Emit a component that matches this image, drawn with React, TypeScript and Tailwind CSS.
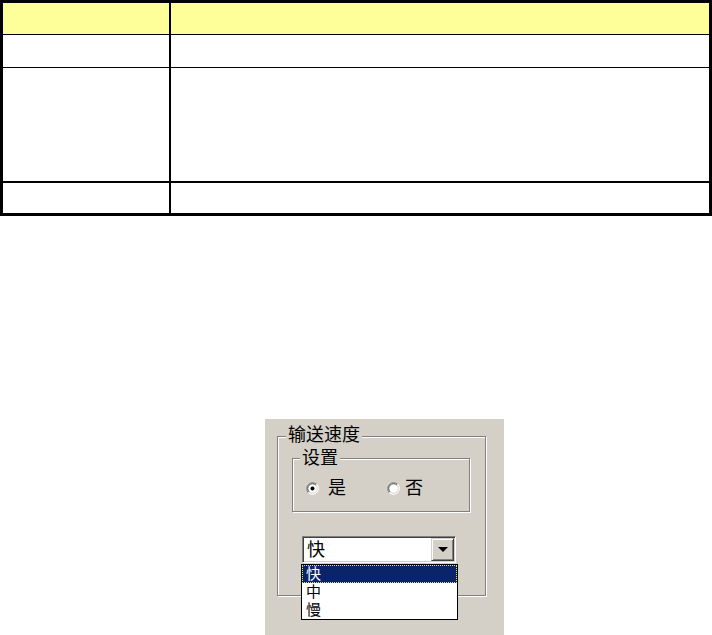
import React from 'react';

// 高度包含下边框（border-box）
const rows = [
  { h: 'h-[32px]', line: 'border-b border-black', bg: 'bg-[#ffff99]' },
  { h: 'h-[33px]', line: 'border-b border-black', bg: 'bg-white' },
  { h: 'h-[115px]', line: 'border-b-2 border-black', bg: 'bg-white' },
  { h: 'h-[30px]', line: '', bg: 'bg-white' },
];

const Radio: React.FC<{ checked?: boolean }> = ({ checked }) => (
  <svg width="13" height="13" viewBox="0 0 13 13" className="shrink-0">
    <circle cx="6.5" cy="6.5" r="6" fill="#ffffff" />
    <path d="M2.26 10.74 A6 6 0 0 1 10.74 2.26" fill="none" stroke="#808080" strokeWidth="1" />
    <path d="M3.1 9.9 A4.8 4.8 0 0 1 9.9 3.1" fill="none" stroke="#404040" strokeWidth="1" />
    <path d="M10.74 2.26 A6 6 0 0 1 2.26 10.74" fill="none" stroke="#ffffff" strokeWidth="1" />
    <path d="M9.9 3.1 A4.8 4.8 0 0 1 3.1 9.9" fill="none" stroke="#d4d0c8" strokeWidth="1" />
    {checked && <circle cx="6.5" cy="6.5" r="2" fill="#000000" />}
  </svg>
);

export default function App() {
  return (
    <div className="w-[712px] min-h-[635px] bg-white font-['Liberation_Sans','Noto_Sans_CJK_SC',sans-serif] text-black">
      {/* 表格 */}
      <div className="w-[712px] border-[3px] border-black">
        {rows.map((r, i) => (
          <div key={i} className={`flex ${r.h} ${r.line} ${r.bg}`}>
            <div className="w-[168px] border-r-2 border-black" />
            <div className="flex-1" />
          </div>
        ))}
      </div>

      {/* 对话框截图 */}
      <div className="ml-[265px] mt-[203px] w-[239px] h-[216px] bg-[#d4d0c8] pt-[17px] pl-[12px] text-[18px] leading-[18px]">
        <div className="relative w-[209px] h-[160px] border border-[#808080] shadow-[inset_1px_1px_0_#ffffff,1px_1px_0_#ffffff]">
          <span className="absolute left-[8px] top-[-11px] px-[2px] bg-[#d4d0c8]">输送速度</span>

          <div className="relative ml-[14px] mt-[21px] w-[178px] h-[54px] border border-[#808080] shadow-[inset_1px_1px_0_#ffffff,1px_1px_0_#ffffff]">
            <span className="absolute left-[7px] top-[-10px] px-[2px] bg-[#d4d0c8]">设置</span>
            <div className="flex items-center pl-[13px] pt-[20px]">
              <Radio checked />
              <span className="ml-[9px]">是</span>
              <span className="ml-[41px]">
                <Radio />
              </span>
              <span className="ml-[5px]">否</span>
            </div>
          </div>

          <div className="ml-[24px] mt-[24px] w-[154px] h-[27px] border border-t-[#808080] border-l-[#808080] border-b-white border-r-white shadow-[inset_1px_1px_0_#404040,inset_-1px_-1px_0_#d4d0c8] p-[1px]">
            <div className="flex h-full bg-white items-center">
              <span className="flex-1 pl-[3px]">快</span>
              <div className="flex w-[23px] h-full items-center justify-center bg-[#d4d0c8] border border-t-[#d4d0c8] border-l-[#d4d0c8] border-b-[#404040] border-r-[#404040] shadow-[inset_1px_1px_0_#ffffff,inset_-1px_-1px_0_#808080]">
                <svg width="10" height="5" viewBox="0 0 10 5">
                  <path d="M0 0 H10 L5 5 Z" fill="#000000" />
                </svg>
              </div>
            </div>
          </div>

          {/* 下拉列表 */}
          <div className="absolute left-[23px] top-[127px] w-[157px] border border-black bg-white text-[15px] leading-[18px]">
            <div className="h-[18px] bg-[#0a246a] text-white border border-dotted border-[#e6d79c] pl-[3px] leading-[16px]">快</div>
            <div className="h-[18px] pl-[4px]">中</div>
            <div className="h-[18px] pl-[4px]">慢</div>
          </div>
        </div>
      </div>
    </div>
  );
}
